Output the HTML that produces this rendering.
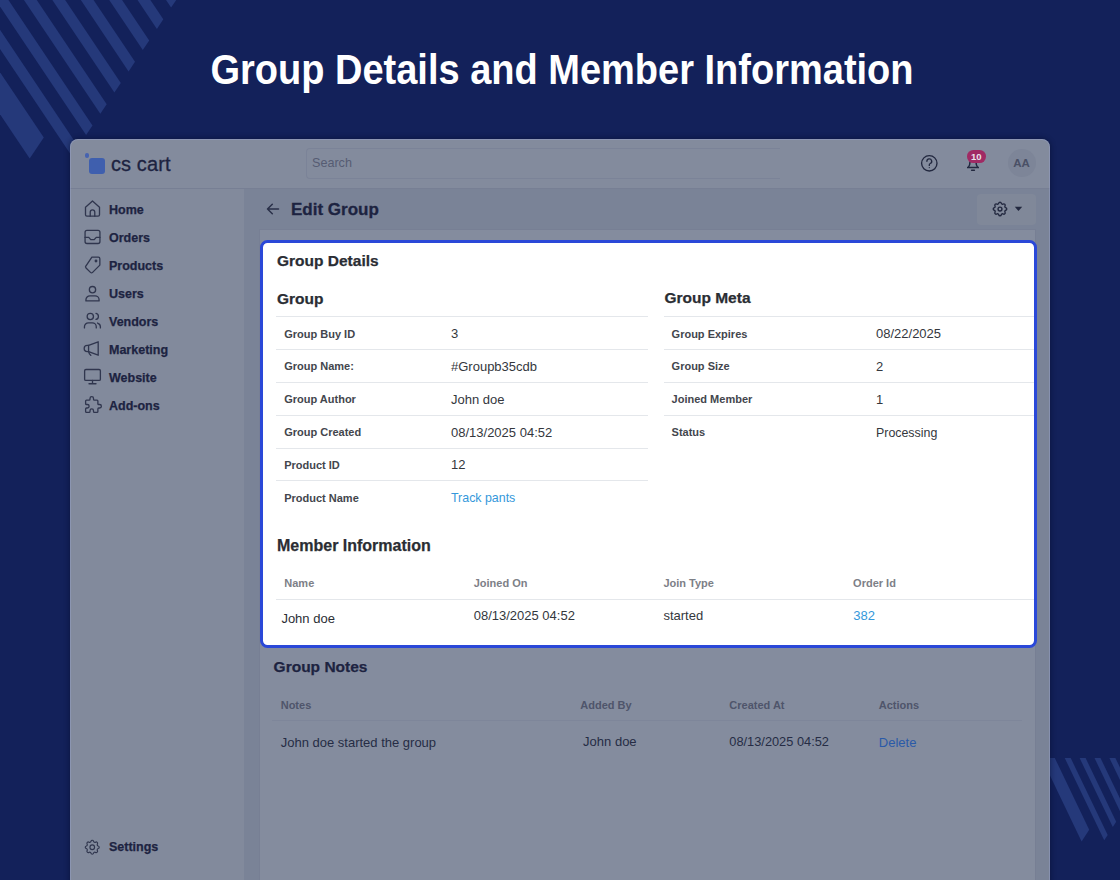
<!DOCTYPE html>
<html><head><meta charset="utf-8">
<style>
*{box-sizing:border-box;margin:0;padding:0}
html,body{width:1120px;height:880px;overflow:hidden}
body{background:#13215a;font-family:"Liberation Sans",sans-serif;position:relative}
.r{position:absolute}
.t{position:absolute;white-space:nowrap;line-height:1}
#title{position:absolute;left:0;width:1120px;text-align:center;color:#fff;font-weight:bold;white-space:nowrap}
</style></head><body>
<svg class="r" style="left:0;top:0" width="1120" height="880" viewBox="0 0 1120 880" fill="#25397a">
<polygon points="-36.1,-5.0 -23.3,-5.0 78.3,146.7 71.9,156.3"/>
<polygon points="-7.7,-5.0 5.1,-5.0 92.5,125.5 86.1,135.1"/>
<polygon points="20.6,-5.0 33.4,-5.0 106.7,104.3 100.3,113.8"/>
<polygon points="49.0,-5.0 61.8,-5.0 120.8,83.0 114.4,92.6"/>
<polygon points="77.5,-5.0 90.2,-5.0 135.0,61.8 128.6,71.4"/>
<polygon points="105.9,-5.0 118.7,-5.0 149.2,40.5 142.8,50.1"/>
<polygon points="134.2,-5.0 147.0,-5.0 163.3,19.3 156.9,28.9"/>
<polygon points="162.7,-5.0 175.5,-5.0 177.5,-1.9 171.1,7.6"/>
<polygon points="-79.9,-5.0 -51.7,-5.0 43.8,137.5 29.7,158.6"/>
<polygon points="1064.7,758.0 1070.7,758.0 1107.7,835.0 1104.2,840.3"/>
<polygon points="1079.6,758.0 1085.6,758.0 1116.2,821.8 1112.8,827.1"/>
<polygon points="1094.5,758.0 1100.5,758.0 1124.8,808.6 1121.3,813.9"/>
<polygon points="1109.4,758.0 1115.4,758.0 1133.4,795.4 1129.9,800.7"/>
<polygon points="1124.3,758.0 1130.3,758.0 1141.9,782.2 1138.5,787.6"/>
<polygon points="1041.6,758.0 1054.8,758.0 1089.2,829.7 1081.6,841.4"/>
</svg>
<div id="title" style="left:2px;top:52.33px;font-size:38px;line-height:1;transform:scaleY(1.11);transform-origin:50% 84.5%">Group Details and Member Information</div>
<div class="r" style="left:70px;top:139px;width:980px;height:760px;border-radius:8px 8px 0 0;box-shadow:0 0 5px 1px rgba(5,12,40,0.45)"></div><div class="r" style="left:70px;top:139px;width:980px;height:50px;background:#838b9d;border-radius:8px 8px 0 0"></div><div class="r" style="left:70px;top:188px;width:980px;height:1px;background:#777f94"></div><div class="r" style="left:70px;top:139px;width:980px;height:760px;border:1px solid rgba(150,162,205,0.45);border-radius:8px 8px 0 0;z-index:5"></div><div class="r" style="left:70px;top:189px;width:174px;height:691px;background:#828a9c"></div><div class="r" style="left:244px;top:189px;width:806px;height:691px;background:#7a8397"></div><div class="r" style="left:259px;top:229px;width:777px;height:660px;background:#848c9e;border:1px solid #777f94"></div><div class="r" style="left:84.7px;top:153.3px;width:4.4px;height:4.4px;border-radius:50%;background:#4663b0"></div><div class="r" style="left:89.2px;top:158px;width:15.6px;height:15.6px;border-radius:3px;background:#3f5fae"></div><div class="t " style="left:111px;top:154.07px;font-size:20px;font-weight:normal;color:#1d2341;letter-spacing:0.1px;-webkit-text-stroke:0.3px #1d2341">cs cart</div>
<div class="r" style="left:306px;top:148px;width:474px;height:31px;border:1px solid #7b8398;border-right:none;border-radius:4px 0 0 4px"></div><div class="t " style="left:312px;top:157.33px;font-size:12.6px;font-weight:normal;color:#565c73;">Search</div>
<svg class="r" style="left:919px;top:153px" width="20" height="20" viewBox="0 0 20 20" fill="none" stroke="#22283f" stroke-width="1.35">
<circle cx="10.3" cy="10.3" r="7.7"/><path d="M7.9 8.3a2.4 2.4 0 1 1 3.4 2.2c-.7.3-1 .8-1 1.5v.4" stroke-linecap="round"/><circle cx="10.3" cy="14.6" r=".6" fill="#22283f" stroke="none"/></svg><svg class="r" style="left:963px;top:151px" width="20" height="22" viewBox="0 0 20 22" fill="none" stroke="#22283f" stroke-width="1.5">
<path d="M4 16.5h12M5.2 16.5c1.3-1.4 1.8-3.2 1.8-5.5V9.5a3 3 0 0 1 6 0V11c0 2.3.5 4.1 1.8 5.5" stroke-linejoin="round"/><path d="M8.6 19.2h2.8" stroke-linecap="round"/></svg><div class="r" style="left:966.5px;top:150.3px;width:19.5px;height:12.8px;border-radius:6.4px;background:#a02a64;color:#e9e1ea;font-size:9.5px;font-weight:bold;line-height:14.5px;text-align:center">10</div><div class="r" style="left:1007.5px;top:149px;width:28px;height:28px;border-radius:50%;background:#7d8598;color:#4a5066;font-size:11.5px;font-weight:bold;line-height:28px;text-align:center">AA</div><div class="t " style="left:109px;top:203.72px;font-size:12.5px;font-weight:bold;color:#1d2341;-webkit-text-stroke:0.25px #1d2341">Home</div>
<div class="t " style="left:109px;top:231.72px;font-size:12.5px;font-weight:bold;color:#1d2341;-webkit-text-stroke:0.25px #1d2341">Orders</div>
<div class="t " style="left:109px;top:259.72px;font-size:12.5px;font-weight:bold;color:#1d2341;-webkit-text-stroke:0.25px #1d2341">Products</div>
<div class="t " style="left:109px;top:287.72px;font-size:12.5px;font-weight:bold;color:#1d2341;-webkit-text-stroke:0.25px #1d2341">Users</div>
<div class="t " style="left:109px;top:315.72px;font-size:12.5px;font-weight:bold;color:#1d2341;-webkit-text-stroke:0.25px #1d2341">Vendors</div>
<div class="t " style="left:109px;top:343.72px;font-size:12.5px;font-weight:bold;color:#1d2341;-webkit-text-stroke:0.25px #1d2341">Marketing</div>
<div class="t " style="left:109px;top:371.72px;font-size:12.5px;font-weight:bold;color:#1d2341;-webkit-text-stroke:0.25px #1d2341">Website</div>
<div class="t " style="left:109px;top:399.72px;font-size:12.5px;font-weight:bold;color:#1d2341;-webkit-text-stroke:0.25px #1d2341">Add-ons</div>
<div class="t " style="left:109px;top:840.82px;font-size:12.5px;font-weight:bold;color:#1d2341;-webkit-text-stroke:0.25px #1d2341">Settings</div>
<svg class="r" style="left:82.1px;top:198.3px" width="21" height="21" viewBox="0 0 24 24" fill="none" stroke="#30364e" stroke-width="1.5" stroke-linecap="round" stroke-linejoin="round"><path d="M4 10.6L12 3.4l8 7.2v8.6a1.6 1.6 0 0 1-1.6 1.6H5.6A1.6 1.6 0 0 1 4 19.2z"/><path d="M9.4 20.8v-4.6a2.6 2.6 0 0 1 5.2 0v4.6"/></svg><svg class="r" style="left:82.1px;top:226.4px" width="21" height="21" viewBox="0 0 24 24" fill="none" stroke="#30364e" stroke-width="1.5" stroke-linecap="round" stroke-linejoin="round"><rect x="3.5" y="5" width="17" height="15" rx="2.2"/><path d="M3.5 13h4.2l2.3 2.6h4l2.3-2.6h4.2"/></svg><svg class="r" style="left:82.1px;top:254.0px" width="21" height="21" viewBox="0 0 24 24" fill="none" stroke="#30364e" stroke-width="1.5" stroke-linecap="round" stroke-linejoin="round"><path d="M11.3 3.6h7.4a1.7 1.7 0 0 1 1.7 1.7v7.4l-8.3 8.3a1.7 1.7 0 0 1-2.4 0l-5.1-5.1a1.7 1.7 0 0 1 0-2.4z"/><circle cx="16" cy="8" r=".9" fill="#2a3049"/></svg><svg class="r" style="left:82.1px;top:282.5px" width="21" height="21" viewBox="0 0 24 24" fill="none" stroke="#30364e" stroke-width="1.5" stroke-linecap="round" stroke-linejoin="round"><circle cx="12" cy="7.6" r="3.6"/><path d="M4.5 20.5v-1.3a4.5 4.5 0 0 1 4.5-4.5h6a4.5 4.5 0 0 1 4.5 4.5v1.3z"/></svg><svg class="r" style="left:82.1px;top:310.4px" width="21" height="21" viewBox="0 0 24 24" fill="none" stroke="#30364e" stroke-width="1.5" stroke-linecap="round" stroke-linejoin="round"><circle cx="9.5" cy="7.5" r="3.6"/><path d="M2.8 20.5v-1.3a4.5 4.5 0 0 1 4.5-4.5h4.5a4.5 4.5 0 0 1 4.5 4.5v1.3"/><path d="M16 3.8a3.6 3.6 0 0 1 0 7"/><path d="M21 20.5v-1.3a4.5 4.5 0 0 0-3.2-4.3"/></svg><svg class="r" style="left:82.1px;top:338.3px" width="21" height="21" viewBox="0 0 24 24" fill="none" stroke="#30364e" stroke-width="1.5" stroke-linecap="round" stroke-linejoin="round"><path d="M7.5 8.5l11-4.2v15.4l-11-4.2z"/><path d="M7.5 8.5H6a3.5 3.5 0 0 0 0 7h1.5"/><path d="M7.7 15.8c.3 2 1 3.2 2.4 4"/></svg><svg class="r" style="left:82.1px;top:366.4px" width="21" height="21" viewBox="0 0 24 24" fill="none" stroke="#30364e" stroke-width="1.5" stroke-linecap="round" stroke-linejoin="round"><rect x="3" y="4" width="18" height="12.5" rx="1.5"/><path d="M12 16.5v3.8M8 20.3h8"/></svg><svg class="r" style="left:83.0px;top:394.2px" width="21" height="21" viewBox="0 0 24 24" fill="none" stroke="#30364e" stroke-width="1.5" stroke-linecap="round" stroke-linejoin="round"><path d="M4 7h3a1 1 0 0 0 1-1v-1a2 2 0 0 1 4 0v1a1 1 0 0 0 1 1h3a1 1 0 0 1 1 1v3a1 1 0 0 0 1 1h1a2 2 0 0 1 0 4h-1a1 1 0 0 0-1 1v3a1 1 0 0 1-1 1h-3a1 1 0 0 1-1-1v-1a2 2 0 0 0-4 0v1a1 1 0 0 1-1 1h-3a1 1 0 0 1-1-1v-3a1 1 0 0 1 1-1h1a2 2 0 0 0 0-4h-1a1 1 0 0 1-1-1v-3a1 1 0 0 1 1-1"/></svg><svg class="r" style="left:83.3px;top:837.5px" width="18.5" height="18.5" viewBox="0 0 24 24" fill="none" stroke="#30364e" stroke-width="1.5" stroke-linecap="round" stroke-linejoin="round"><path d="M10.3 4.3c.4-1.8 3-1.8 3.4 0a1.7 1.7 0 0 0 2.6 1.1c1.5-.9 3.3.8 2.4 2.4a1.7 1.7 0 0 0 1 2.5c1.8.4 1.8 3 0 3.4a1.7 1.7 0 0 0-1 2.6c.9 1.5-.9 3.3-2.4 2.4a1.7 1.7 0 0 0-2.6 1c-.4 1.8-3 1.8-3.4 0a1.7 1.7 0 0 0-2.6-1c-1.5.9-3.3-.9-2.4-2.4a1.7 1.7 0 0 0-1-2.6c-1.8-.4-1.8-3 0-3.4a1.7 1.7 0 0 0 1-2.5c-.9-1.6.9-3.3 2.4-2.4a1.7 1.7 0 0 0 2.6-1.1z"/><circle cx="12" cy="12" r="3"/></svg><svg class="r" style="left:265px;top:202px" width="16" height="14" viewBox="0 0 16 14" fill="none" stroke="#2a3049" stroke-width="1.5" stroke-linecap="round" stroke-linejoin="round"><path d="M2.5 7h11M7.3 2.2L2.5 7l4.8 4.8"/></svg><div class="t " style="left:291px;top:200.81px;font-size:17px;font-weight:bold;color:#1d2341;-webkit-text-stroke:0.3px #1d2341">Edit Group</div>
<div class="r" style="left:977px;top:194px;width:59px;height:31px;border-radius:4px;background:#808899"></div><svg class="r" style="left:991px;top:200px" width="18" height="18" viewBox="0 0 24 24" fill="none" stroke="#22283f" stroke-width="1.8" stroke-linecap="round" stroke-linejoin="round"><path d="M10.3 4.3c.4-1.8 3-1.8 3.4 0a1.7 1.7 0 0 0 2.6 1.1c1.5-.9 3.3.8 2.4 2.4a1.7 1.7 0 0 0 1 2.5c1.8.4 1.8 3 0 3.4a1.7 1.7 0 0 0-1 2.6c.9 1.5-.9 3.3-2.4 2.4a1.7 1.7 0 0 0-2.6 1c-.4 1.8-3 1.8-3.4 0a1.7 1.7 0 0 0-2.6-1c-1.5.9-3.3-.9-2.4-2.4a1.7 1.7 0 0 0-1-2.6c-1.8-.4-1.8-3 0-3.4a1.7 1.7 0 0 0 1-2.5c-.9-1.6.9-3.3 2.4-2.4a1.7 1.7 0 0 0 2.6-1.1z"/><circle cx="12" cy="12" r="2.6"/></svg><svg class="r" style="left:1014px;top:206px" width="9" height="6" viewBox="0 0 9 6"><path d="M0.8 0.8h7.4L4.5 5z" fill="#22283f"/></svg><div class="r" style="left:260px;top:239.6px;width:777px;height:408.4px;background:#fff;border:3.1px solid #2a48d8;border-radius:7.5px"></div><div class="t " style="left:277px;top:252.78px;font-size:15.5px;font-weight:bold;color:#2a2d33;-webkit-text-stroke:0.25px #2a2d33">Group Details</div>
<div class="t " style="left:277px;top:290.58px;font-size:15.5px;font-weight:bold;color:#2a2d33;-webkit-text-stroke:0.25px #2a2d33">Group</div>
<div class="t " style="left:664.4px;top:290.48px;font-size:15.5px;font-weight:bold;color:#2a2d33;-webkit-text-stroke:0.25px #2a2d33">Group Meta</div>
<div class="r" style="left:276px;top:316.0px;width:372px;height:1px;background:#e4e7eb"></div><div class="r" style="left:276px;top:348.8px;width:372px;height:1px;background:#e4e7eb"></div><div class="r" style="left:276px;top:381.8px;width:372px;height:1px;background:#e4e7eb"></div><div class="r" style="left:276px;top:414.7px;width:372px;height:1px;background:#e4e7eb"></div><div class="r" style="left:276px;top:447.5px;width:372px;height:1px;background:#e4e7eb"></div><div class="r" style="left:276px;top:480.3px;width:372px;height:1px;background:#e4e7eb"></div><div class="r" style="left:664px;top:316.0px;width:370px;height:1px;background:#e4e7eb"></div><div class="r" style="left:664px;top:348.8px;width:370px;height:1px;background:#e4e7eb"></div><div class="r" style="left:664px;top:381.8px;width:370px;height:1px;background:#e4e7eb"></div><div class="r" style="left:664px;top:414.7px;width:370px;height:1px;background:#e4e7eb"></div><div class="t " style="left:284.2px;top:328.59px;font-size:11px;font-weight:bold;color:#43464d;">Group Buy ID</div>
<div class="t " style="left:451px;top:326.90px;font-size:13px;font-weight:normal;color:#34373d;">3</div>
<div class="t " style="left:284.2px;top:361.39px;font-size:11px;font-weight:bold;color:#43464d;">Group Name:</div>
<div class="t " style="left:451px;top:359.70px;font-size:13px;font-weight:normal;color:#34373d;">#Groupb35cdb</div>
<div class="t " style="left:284.2px;top:394.39px;font-size:11px;font-weight:bold;color:#43464d;">Group Author</div>
<div class="t " style="left:451px;top:392.70px;font-size:13px;font-weight:normal;color:#34373d;">John doe</div>
<div class="t " style="left:284.2px;top:427.29px;font-size:11px;font-weight:bold;color:#43464d;">Group Created</div>
<div class="t " style="left:451px;top:425.60px;font-size:13px;font-weight:normal;color:#34373d;">08/13/2025 04:52</div>
<div class="t " style="left:284.2px;top:460.09px;font-size:11px;font-weight:bold;color:#43464d;">Product ID</div>
<div class="t " style="left:451px;top:458.40px;font-size:13px;font-weight:normal;color:#34373d;">12</div>
<div class="t " style="left:284.2px;top:492.89px;font-size:11px;font-weight:bold;color:#43464d;">Product Name</div>
<div class="t " style="left:451px;top:491.20px;font-size:13px;font-weight:normal;color:#34373d;"><span style="color:#3498db;font-size:12.4px">Track pants</span></div>
<div class="t " style="left:671.6px;top:328.59px;font-size:11px;font-weight:bold;color:#43464d;">Group Expires</div>
<div class="t " style="left:876px;top:326.90px;font-size:13px;font-weight:normal;color:#34373d;">08/22/2025</div>
<div class="t " style="left:671.6px;top:361.39px;font-size:11px;font-weight:bold;color:#43464d;">Group Size</div>
<div class="t " style="left:876px;top:359.70px;font-size:13px;font-weight:normal;color:#34373d;">2</div>
<div class="t " style="left:671.6px;top:394.39px;font-size:11px;font-weight:bold;color:#43464d;">Joined Member</div>
<div class="t " style="left:876px;top:392.70px;font-size:13px;font-weight:normal;color:#34373d;">1</div>
<div class="t " style="left:671.6px;top:427.29px;font-size:11px;font-weight:bold;color:#43464d;">Status</div>
<div class="t " style="left:876px;top:425.60px;font-size:13px;font-weight:normal;color:#34373d;"><span style="font-size:12.4px">Processing</span></div>
<div class="t " style="left:277px;top:537.86px;font-size:16px;font-weight:bold;color:#2a2d33;-webkit-text-stroke:0.25px #2a2d33">Member Information</div>
<div class="t " style="left:284.3px;top:577.89px;font-size:11px;font-weight:bold;color:#7d8087;">Name</div>
<div class="t " style="left:473.7px;top:577.89px;font-size:11px;font-weight:bold;color:#7d8087;">Joined On</div>
<div class="t " style="left:663.4px;top:577.89px;font-size:11px;font-weight:bold;color:#7d8087;">Join Type</div>
<div class="t " style="left:853.1px;top:577.89px;font-size:11px;font-weight:bold;color:#7d8087;">Order Id</div>
<div class="r" style="left:276px;top:598.5px;width:758px;height:1px;background:#e4e7eb"></div><div class="t " style="left:281.4px;top:611.90px;font-size:13px;font-weight:normal;color:#2b2e34;">John doe</div>
<div class="t " style="left:473.7px;top:609.00px;font-size:13px;font-weight:normal;color:#34373d;">08/13/2025 04:52</div>
<div class="t " style="left:663.4px;top:608.60px;font-size:13px;font-weight:normal;color:#34373d;">started</div>
<div class="t " style="left:853.3px;top:608.60px;font-size:13px;font-weight:normal;color:#3498db;">382</div>
<div class="t " style="left:273.6px;top:659.08px;font-size:15.5px;font-weight:bold;color:#1d2341;-webkit-text-stroke:0.25px #1d2341">Group Notes</div>
<div class="t " style="left:280.7px;top:700.29px;font-size:11px;font-weight:bold;color:#4f556b;">Notes</div>
<div class="t " style="left:580.3px;top:700.29px;font-size:11px;font-weight:bold;color:#4f556b;">Added By</div>
<div class="t " style="left:729.3px;top:700.29px;font-size:11px;font-weight:bold;color:#4f556b;">Created At</div>
<div class="t " style="left:878.8px;top:700.29px;font-size:11px;font-weight:bold;color:#4f556b;">Actions</div>
<div class="r" style="left:272px;top:720px;width:750px;height:1px;background:#7e869a"></div><div class="t " style="left:280.7px;top:736.00px;font-size:13px;font-weight:normal;color:#262c45;">John doe started the group</div>
<div class="t " style="left:583.1px;top:735.40px;font-size:13px;font-weight:normal;color:#262c45;">John doe</div>
<div class="t " style="left:729.3px;top:736.16px;font-size:12.8px;font-weight:normal;color:#262c45;">08/13/2025 04:52</div>
<div class="t " style="left:878.8px;top:736.00px;font-size:13px;font-weight:normal;color:#2a5aa8;">Delete</div>

</body></html>
